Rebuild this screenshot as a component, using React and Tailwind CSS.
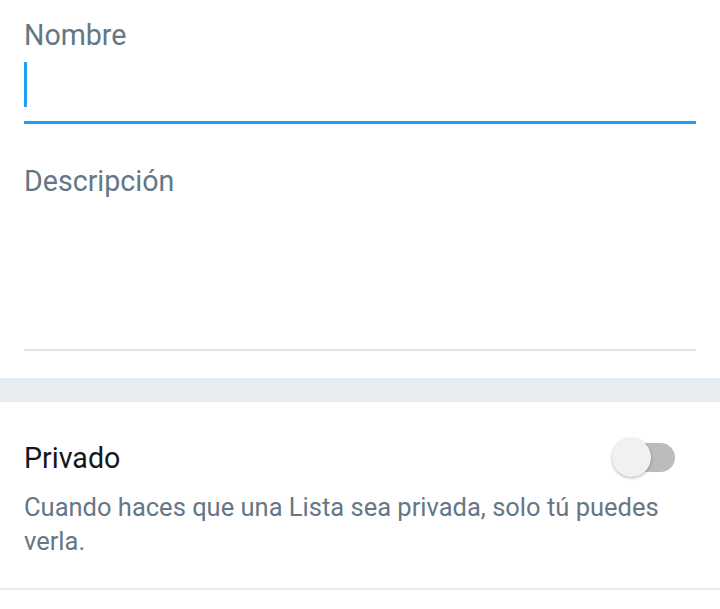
export default function App() {
  const font = { fontFamily: "Roboto, 'Noto Sans', sans-serif" };
  return (
    <div className="w-[720px] h-[609px] bg-white overflow-hidden" style={font}>
      <div className="px-6">
        <div className="pt-[19px] text-[28.6px] leading-[32px] text-[#657786]">Nombre</div>
        <div className="pt-[11px] pb-[14px]">
          <div className="w-[3px] h-[45px] bg-[#1da1f2]"></div>
        </div>
        <div className="h-[3px] bg-[#1da1f2]"></div>
        <div className="pt-[41px] text-[28.6px] leading-[32px] text-[#657786]">Descripción</div>
        <div className="h-[152px]"></div>
        <div className="h-[2px] bg-[#dde3e8]"></div>
      </div>
      <div className="mt-[27px] h-[24px] bg-[#e6ecf0]"></div>
      <div className="px-6">
        <div className="flex items-center justify-between pt-[36px]">
          <div className="text-[28.6px] leading-[32px] text-[#14171a]">Privado</div>
          <div className="relative w-[63px] h-[39px] mr-[21px]">
            <div className="absolute left-[6px] right-0 top-[5px] h-[29px] rounded-full bg-[#bcbcbc]"></div>
            <div className="absolute left-0 top-0 w-[39px] h-[39px] rounded-full bg-[#f1f1f1] shadow-[0_1px_3px_rgba(0,0,0,0.3)]"></div>
          </div>
        </div>
        <div className="mt-[13px] text-[25.5px] leading-[34px] text-[#657786]">
          Cuando haces que una Lista sea privada, solo tú puedes verla.
        </div>
      </div>
      <div className="mt-[30px] h-[2px] bg-[#e6ecf0]"></div>
    </div>
  );
}
